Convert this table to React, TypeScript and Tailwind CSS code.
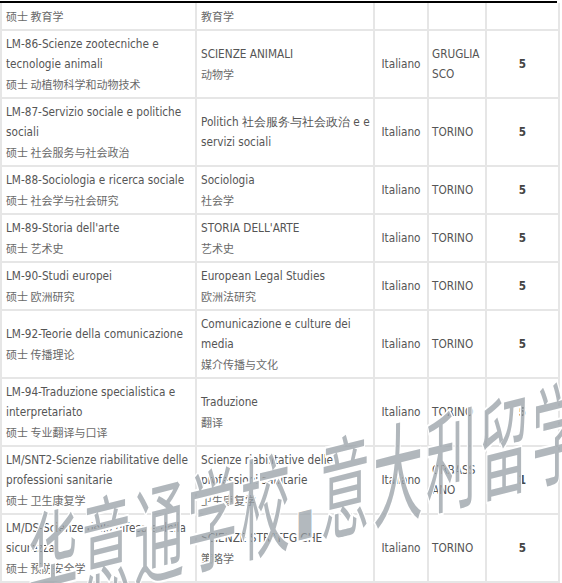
type Row = {
  major: string[];
  majorCn: string;
  name: string[];
  nameCn: string;
  lang: string;
  city: string[];
  seats: string;
};

const rows: Row[] = [
  {
    major: ["LM-86-Scienze zootecniche e", "tecnologie animali"],
    majorCn: "硕士 动植物科学和动物技术",
    name: ["SCIENZE ANIMALI"],
    nameCn: "动物学",
    lang: "Italiano",
    city: ["GRUGLIA", "SCO"],
    seats: "5",
  },
  {
    major: ["LM-87-Servizio sociale e politiche", "sociali"],
    majorCn: "硕士 社会服务与社会政治",
    name: ["Politich 社会服务与社会政治 e e", "servizi sociali"],
    nameCn: "",
    lang: "Italiano",
    city: ["TORINO"],
    seats: "5",
  },
  {
    major: ["LM-88-Sociologia e ricerca sociale"],
    majorCn: "硕士 社会学与社会研究",
    name: ["Sociologia"],
    nameCn: "社会学",
    lang: "Italiano",
    city: ["TORINO"],
    seats: "5",
  },
  {
    major: ["LM-89-Storia dell'arte"],
    majorCn: "硕士 艺术史",
    name: ["STORIA DELL'ARTE"],
    nameCn: "艺术史",
    lang: "Italiano",
    city: ["TORINO"],
    seats: "5",
  },
  {
    major: ["LM-90-Studi europei"],
    majorCn: "硕士 欧洲研究",
    name: ["European Legal Studies"],
    nameCn: "欧洲法研究",
    lang: "Italiano",
    city: ["TORINO"],
    seats: "5",
  },
  {
    major: ["LM-92-Teorie della comunicazione"],
    majorCn: "硕士 传播理论",
    name: ["Comunicazione e culture dei", "media"],
    nameCn: "媒介传播与文化",
    lang: "Italiano",
    city: ["TORINO"],
    seats: "5",
  },
  {
    major: ["LM-94-Traduzione specialistica e", "interpretariato"],
    majorCn: "硕士 专业翻译与口译",
    name: ["Traduzione"],
    nameCn: "翻译",
    lang: "Italiano",
    city: ["TORINO"],
    seats: "5",
  },
  {
    major: ["LM/SNT2-Scienze riabilitative delle", "professioni sanitarie"],
    majorCn: "硕士 卫生康复学",
    name: ["Scienze riabilitative delle", "professioni sanitarie"],
    nameCn: " 卫生康复学",
    lang: "Italiano",
    city: ["ORBASS", "ANO"],
    seats: "1",
  },
  {
    major: ["LM/DS-Scienze della difesa e della", "sicurezza"],
    majorCn: "硕士 预防安全学",
    name: ["SCIENZE STRATEGICHE"],
    nameCn: "策略学",
    lang: "Italiano",
    city: ["TORINO"],
    seats: "5",
  },
];

const cell = "border-2 border-[#e6e6e6] px-[4px] py-[3px] align-middle";
const cn = "text-[11px] text-[#6a6a6a] font-['Noto_Sans_CJK_SC',sans-serif]";

function Lines({ lines }: { lines: string[] }) {
  return (
    <>
      {lines.map((l) => (
        <div key={l} className="whitespace-nowrap">{l}</div>
      ))}
    </>
  );
}

export default function App() {
  return (
    <div className="relative w-[562px] h-[583px] overflow-hidden bg-white">
      <div className="h-[2px] w-[557px] bg-black mt-[1px]" />
      <table className="w-[558px] border-collapse table-fixed font-['DejaVu_Sans_Condensed','DejaVu_Sans',sans-serif] text-[11.7px] leading-[20px] text-[#555]">
        <colgroup>
          <col className="w-[195px]" />
          <col className="w-[178px]" />
          <col className="w-[54px]" />
          <col className="w-[58px]" />
          <col className="w-[73px]" />
        </colgroup>
        <tbody>
          <tr className="h-[27px]">
            <td className={`${cell} border-t-0`}>
              <div className={cn}>硕士 教育学</div>
            </td>
            <td className={`${cell} border-t-0`}>
              <div className={cn}>教育学</div>
            </td>
            <td className={`${cell} border-t-0`} />
            <td className={`${cell} border-t-0`} />
            <td className={`${cell} border-t-0`} />
          </tr>
          {rows.map((r) => (
            <tr key={r.major[0]}>
              <td className={cell}>
                <Lines lines={r.major} />
                <div className={cn}>{r.majorCn}</div>
              </td>
              <td className={cell}>
                <Lines lines={r.name} />
                {r.nameCn && <div className={cn}>{r.nameCn}</div>}
              </td>
              <td className={`${cell} text-center`}>{r.lang}</td>
              <td className={`${cell} pl-[3px]`}>
                <Lines lines={r.city} />
              </td>
              <td className={`${cell} text-center font-bold text-[#444]`}>{r.seats}</td>
            </tr>
          ))}
        </tbody>
      </table>

      {/* watermark */}
      <div className="pointer-events-none absolute left-[28px] top-[534px] h-[50px] origin-left [transform:skewY(-14deg)_scaleY(2.2)] whitespace-nowrap font-['Noto_Sans_CJK_SC',sans-serif] text-[50px] leading-[50px] tracking-[3px] text-[rgba(150,158,165,0.74)] [-webkit-text-stroke:2px_white] [paint-order:stroke_fill]">
        <span>华意通学校</span>
        <span className="text-[16px] mx-[4px]">■</span>
        <span>意大利留学</span>
      </div>
    </div>
  );
}
